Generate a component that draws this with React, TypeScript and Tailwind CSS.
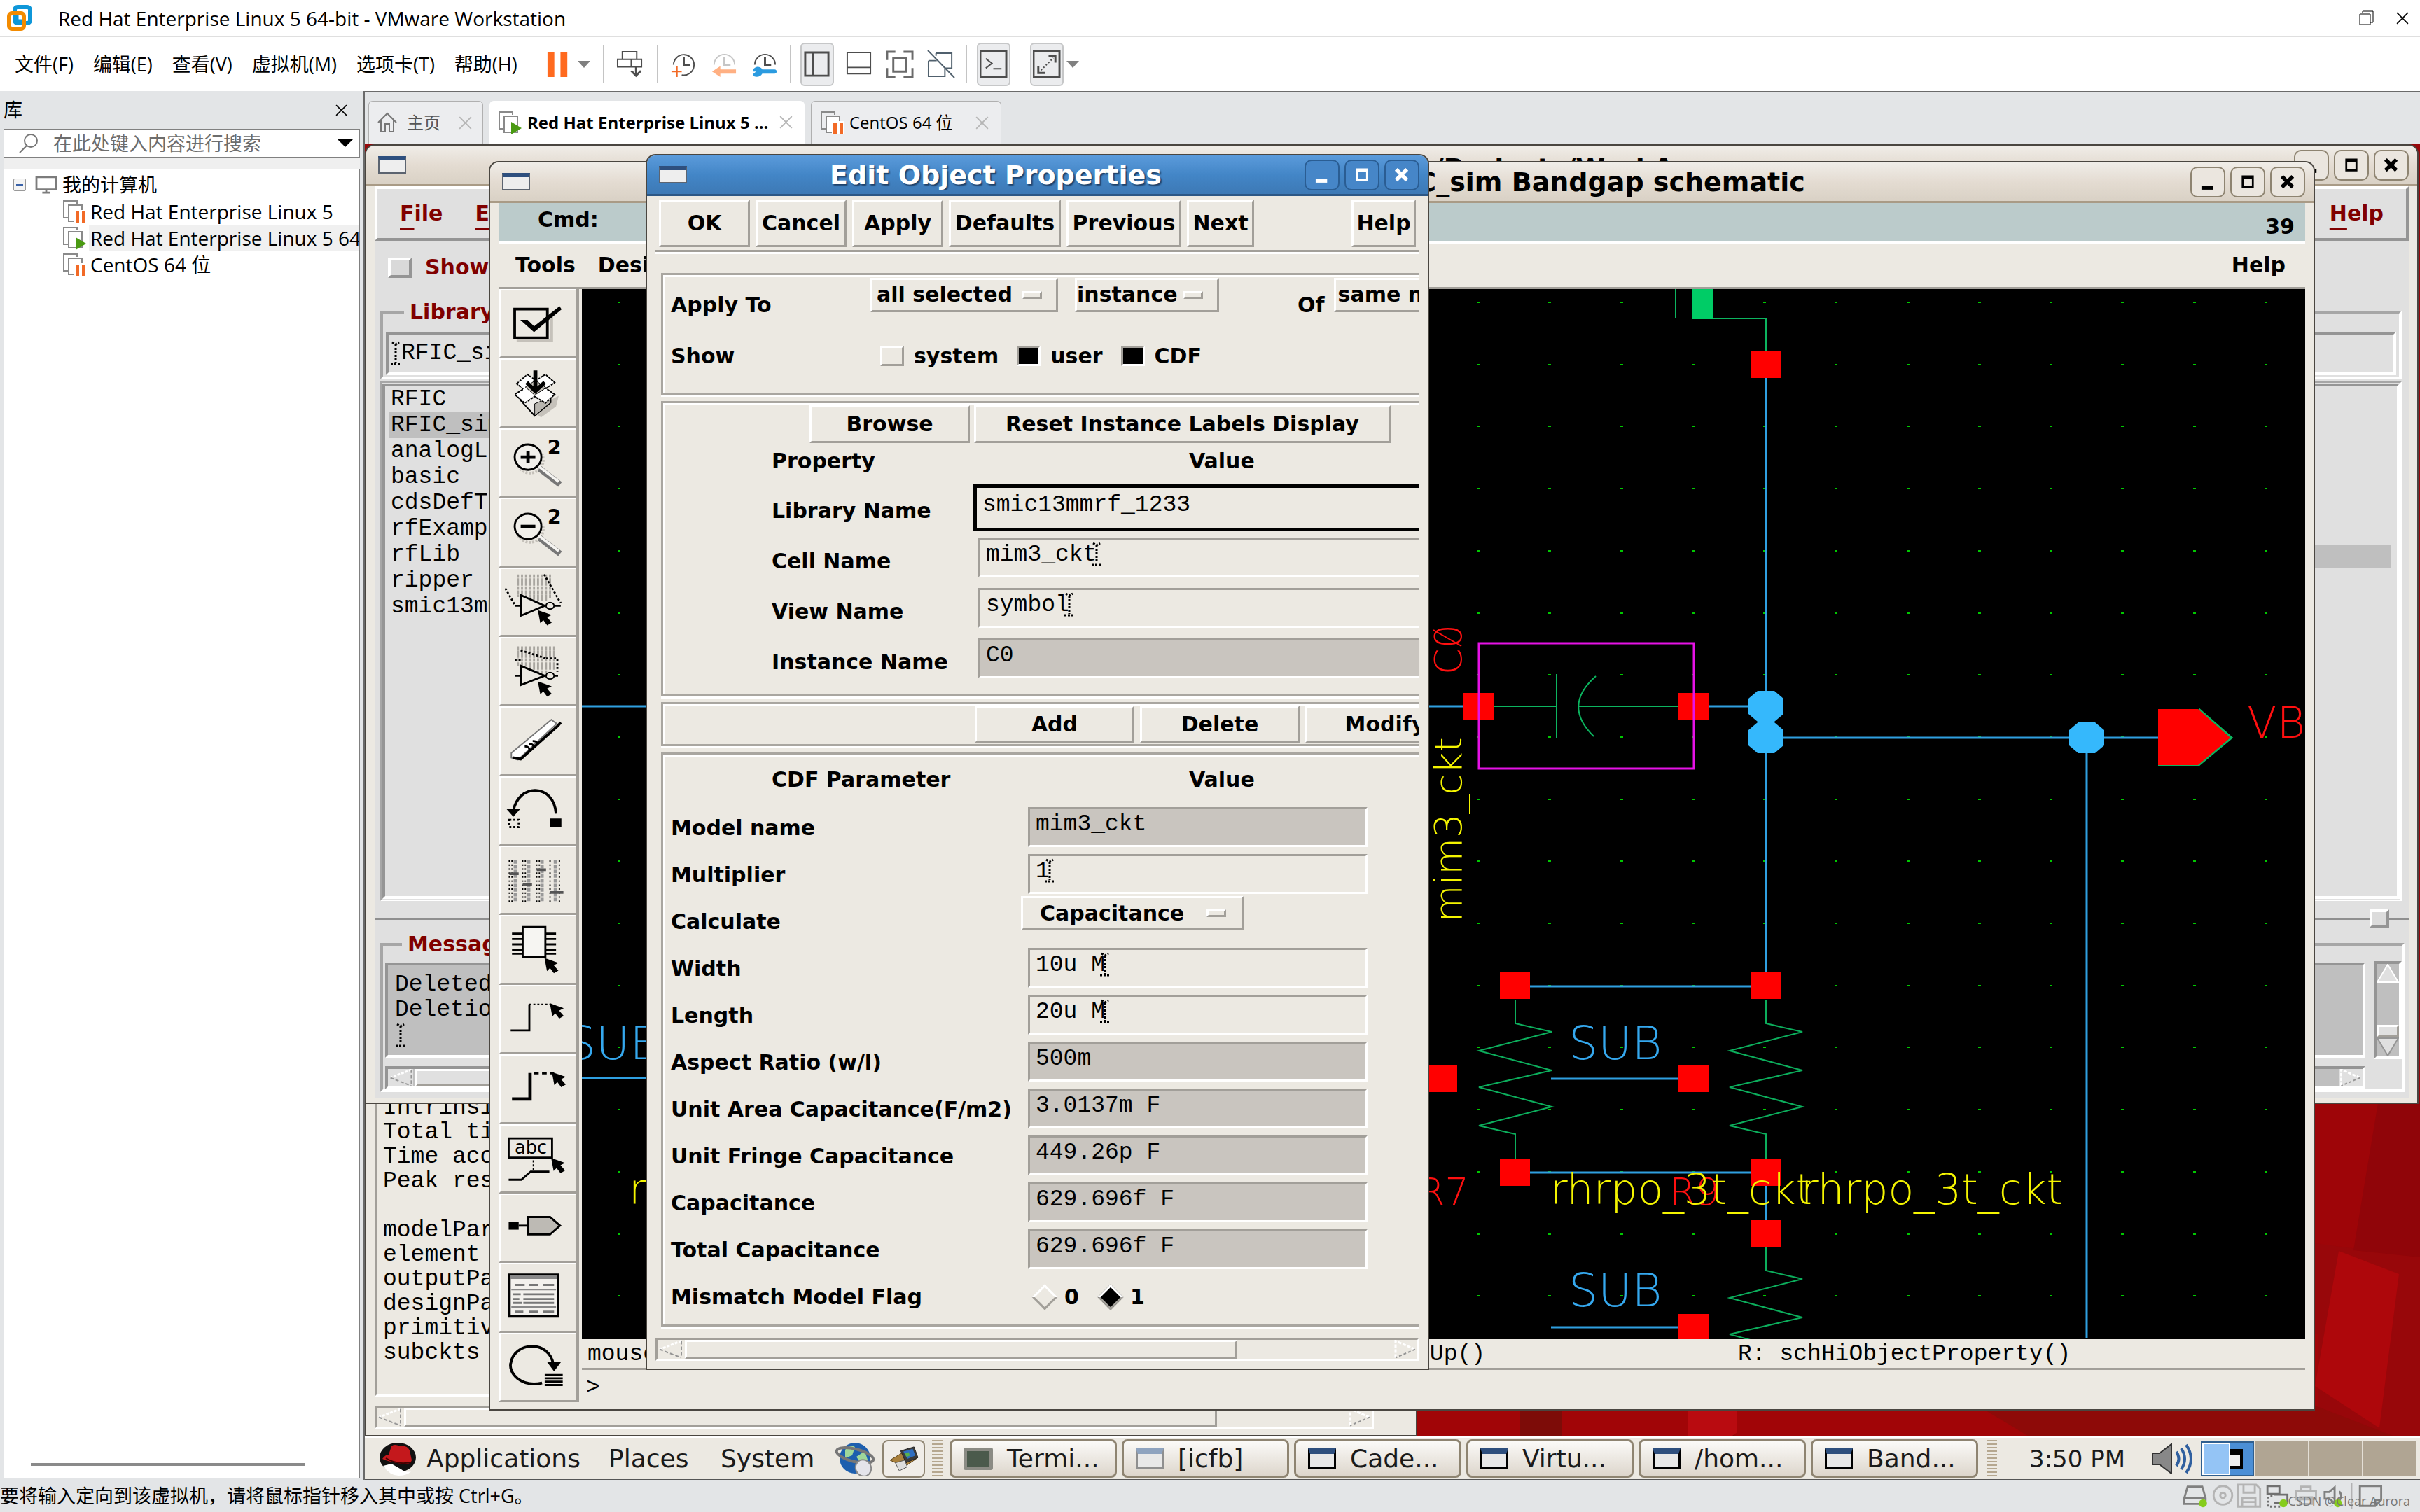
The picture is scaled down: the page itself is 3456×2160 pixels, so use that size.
import type { ReactNode } from 'react'

const ui = "font-['Open_Sans','Noto_Sans_CJK_SC',sans-serif]"
const label = "font-['DejaVu_Sans',sans-serif] font-bold text-[30px] leading-[36px] whitespace-nowrap"
const mono = "font-['Liberation_Mono',monospace] text-[33px] whitespace-pre"
const raised = 'border-[3px] border-t-white border-l-white border-r-[#a29f99] border-b-[#a29f99]'
const sunken = 'border-[3px] border-t-[#a29f99] border-l-[#a29f99] border-r-white border-b-white'
const raisedGray = 'border-[4px] border-t-white border-l-white border-r-[#959595] border-b-[#959595]'
const sunkenGray = 'border-[4px] border-t-[#959595] border-l-[#959595] border-r-white border-b-white'

/* ---------- VMware chrome ---------- */

function MenuBar() {
  const menus = ['文件(F)', '编辑(E)', '查看(V)', '虚拟机(M)', '选项卡(T)', '帮助(H)']
  return (
    <nav className="flex h-[79px] items-center border-t-2 border-[#dfdfdf] bg-white pl-[21px]">
      <div className="flex w-[737px] gap-[28px]">
        {menus.map((m) => (
          <button key={m} type="button" className="whitespace-nowrap">
            {m}
          </button>
        ))}
      </div>
      <Separator />
      <ToolButton title="Pause" className="ml-[20px] w-[38px]">
        <path d="M4 2h10v37H4zM23 2h10v37H23z" fill="#ff6a1f" />
      </ToolButton>
      <Caret className="ml-[8px] mr-[18px]" />
      <Separator />
      <ToolButton title="Ctrl+Alt+Del" className="ml-[18px] mr-[18px] w-[40px]">
        <g fill="none" stroke="#4d4d4d" strokeWidth="2">
          <path d="M9 12V2h21v10M2 13h35v11H2zM22 13v11" />
          <path d="M29 24v11M22 30l7 7 7-7" strokeWidth="3" />
        </g>
      </ToolButton>
      <Separator />
      <ToolButton title="Take snapshot" className="ml-[17px] w-[40px]">
        <path d="M6 21A15 15 0 1 1 18 36" fill="none" stroke="#4d4d4d" strokeWidth="2" />
        <path d="M21 10v11h9" fill="none" stroke="#4d4d4d" strokeWidth="3" />
        <path d="M3 31h15M11 23v16" stroke="#f26a26" strokeWidth="2" />
      </ToolButton>
      <ToolButton title="Revert snapshot" className="ml-[18px] w-[40px]">
        <path d="M6 21A15 15 0 1 1 36 21" fill="none" stroke="#c6c6c6" strokeWidth="2" />
        <path d="M21 10v11h9" fill="none" stroke="#c6c6c6" strokeWidth="3" />
        <path d="M3 31l12-8v5h23v6H15v5z" fill="#ffb083" />
      </ToolButton>
      <ToolButton title="Snapshot manager" className="ml-[18px] mr-[16px] w-[40px]">
        <path d="M6 21A15 15 0 1 1 36 21" fill="none" stroke="#4d4d4d" strokeWidth="2" />
        <path d="M21 10v11h9" fill="none" stroke="#4d4d4d" strokeWidth="3" />
        <path d="M8 31H3c1-8 11-9 14-3h18a3 3 0 0 1 0 6H17c-3 6-13 6-14 1z" fill="#2b9be0" />
      </ToolButton>
      <Separator />
      <ToolButton title="Library" pressed className="ml-[14px] w-[48px]">
        <path d="M3 3h34v34H3zM14 3v34" fill="none" stroke="#4d4d4d" strokeWidth="3" />
      </ToolButton>
      <ToolButton title="Thumbnails" className="ml-[16px] w-[40px]">
        <path d="M3 3h34v31H3zM3 25h34" fill="none" stroke="#4d4d4d" strokeWidth="2" />
      </ToolButton>
      <ToolButton title="Full screen" className="ml-[17px] w-[42px]">
        <path d="M2 14V2h12M26 2h13v12M39 26v13H26M14 39H2V26M11 11h19v20H11z" fill="none" stroke="#6b6b6b" strokeWidth="3" />
      </ToolButton>
      <ToolButton title="Unity" className="ml-[17px] mr-[15px] w-[42px]">
        <path d="M13 4h23v22H26M13 4v4M3 15h11M26 27v11H2V15" fill="none" stroke="#50606d" strokeWidth="2" />
        <path d="M1 0l39 40" stroke="#50606d" strokeWidth="2" />
      </ToolButton>
      <Separator />
      <ToolButton title="Console" pressed className="ml-[14px] mr-[13px] w-[48px]">
        <path d="M1 1h38v38H1z" fill="none" stroke="#4d4d4d" strokeWidth="3" />
        <path d="M9 12l9 7-9 7M20 27h12" fill="none" stroke="#4d4d4d" strokeWidth="2" />
      </ToolButton>
      <Separator />
      <ToolButton title="Stretch" pressed className="ml-[14px] w-[48px]">
        <path d="M1 1h38v38H1z" fill="none" stroke="#4d4d4d" strokeWidth="3" />
        <path d="M23 8h10v10M8 23v10h10" fill="none" stroke="#4d4d4d" strokeWidth="3" />
        <path d="M12 29l18-18" stroke="#4d4d4d" strokeWidth="2" strokeDasharray="2 3" />
      </ToolButton>
      <Caret className="ml-[4px]" />
    </nav>
  )
}

function Separator() {
  return <div className="h-[55px] w-px shrink-0 bg-[#c4c4c4]" />
}

function Caret({ className = '' }: { className?: string }) {
  return (
    <svg viewBox="0 0 18 10" className={`h-[10px] w-[18px] shrink-0 ${className}`}>
      <path d="M0 0h18l-9 10z" fill="#808080" />
    </svg>
  )
}

function ToolButton({ title, pressed, className = '', children }: { title: string; pressed?: boolean; className?: string; children: ReactNode }) {
  return (
    <button
      type="button"
      aria-label={title}
      className={`flex h-[62px] shrink-0 items-center justify-center ${pressed ? 'rounded-[6px] border-2 border-[#c6c7c8] bg-[#ebecee]' : ''} ${className}`}
    >
      <svg viewBox="0 0 41 41" className="size-[40px] shrink-0">
        {children}
      </svg>
    </button>
  )
}

function VmIcon({ state }: { state: 'paused' | 'running' }) {
  return (
    <svg viewBox="0 0 34 34" className="size-[34px] shrink-0">
      <path d="M10 26H2V2h19v4" fill="none" stroke="#8a8a8a" strokeWidth="2" />
      <path d="M9 8h19v23H9z" fill="#fff" stroke="#8a8a8a" strokeWidth="2" />
      {state === 'paused' ? (
        <>
          <path d="M17 15h17v19H17z" fill="#fff" />
          <path d="M19 17h5v16h-5zM28 17h5v16h-5z" fill="#f26a26" />
        </>
      ) : (
        <path d="M19 16l15 9-15 9z" fill="#4a9a12" />
      )}
    </svg>
  )
}

function Cross({ color, className }: { color: string; className: string }) {
  return (
    <svg viewBox="0 0 16 16" className={`shrink-0 ${className}`}>
      <path d="M1 1l14 14M15 1L1 15" stroke={color} strokeWidth="1.5" />
    </svg>
  )
}

function Sidebar() {
  const machines = [
    { name: 'Red Hat Enterprise Linux 5', state: 'paused' },
    { name: 'Red Hat Enterprise Linux 5 64', state: 'running' },
    { name: 'CentOS 64 位', state: 'paused' },
  ] as const
  return (
    <aside className="flex w-[519px] shrink-0 flex-col pb-[2px] pl-[5px] pr-[5px]">
      <div className="flex h-[54px] items-center justify-between pr-[18px]">
        <span>库</span>
        <button type="button" aria-label="Close library">
          <Cross color="#000" className="size-[17px]" />
        </button>
      </div>
      <div className="flex h-[41px] items-center border border-[#808080] bg-white pl-[20px] pr-[9px]">
        <svg viewBox="0 0 30 30" className="mr-[20px] size-[30px] shrink-0">
          <circle cx="18" cy="11" r="9" fill="none" stroke="#777" strokeWidth="2" />
          <path d="M12 18L2 28" stroke="#777" strokeWidth="2" />
        </svg>
        <input aria-label="搜索" placeholder="在此处键入内容进行搜索" className="min-w-0 flex-1 bg-transparent outline-none placeholder:text-[#6d6d6d]" />
        <svg viewBox="0 0 22 11" className="h-[11px] w-[22px] shrink-0">
          <path d="M0 0h22L11 11z" />
        </svg>
      </div>
      <div className="h-[16px] bg-[#efefef]" />
      <div className="flex flex-1 flex-col border border-[#808080] bg-white pt-[3px]">
        <div className="flex h-[38px] items-center pl-[13px]">
          <span className="flex size-[18px] items-center justify-center rounded-[2px] border border-[#999] bg-[#f4f4f4]">
            <span className="h-[2px] w-[10px] bg-[#3a62a8]" />
          </span>
          <svg viewBox="0 0 36 30" className="ml-[12px] mr-[6px] h-[28px] w-[34px]">
            <path d="M3 3h30v19H3zM12 27h12M18 22v5" fill="none" stroke="#7c7c7c" strokeWidth="3" />
          </svg>
          <span>我的计算机</span>
        </div>
        {machines.map((m) => (
          <div key={m.name} className="flex h-[38px] items-center overflow-hidden pl-[83px]">
            <VmIcon state={m.state} />
            <span className={`ml-[4px] flex-1 whitespace-nowrap pl-[2px] text-[28px] ${m.state === 'running' ? 'bg-[#f0f0f0]' : ''}`}>{m.name}</span>
          </div>
        ))}
        <div className="mb-[17px] ml-[38px] mt-auto h-[4px] w-[392px] bg-[#8a8a8a]" />
      </div>
    </aside>
  )
}

function Tabs() {
  return (
    <div className="flex h-[73px] items-end gap-[9px] pl-[5px] text-[24px]">
      <button type="button" className="flex h-[61px] w-[164px] items-center rounded-t-[6px] border border-b-0 border-[#b0b0b0] bg-[#ecedef] pl-[11px] text-[#555]">
        <svg viewBox="0 0 30 30" className="mr-[13px] size-[30px]">
          <path d="M2 15L15 2l13 13M6 12v16h6V17h6v11h6V12" fill="none" stroke="#777" strokeWidth="2" />
        </svg>
        <span className="whitespace-nowrap">主页</span>
        <Cross color="#b5b5b5" className="ml-[26px] size-[19px]" />
      </button>
      <button type="button" className="flex h-[61px] w-[450px] items-center rounded-t-[6px] bg-white pl-[12px] font-bold">
        <VmIcon state="running" />
        <span className="ml-[8px] w-[354px] overflow-hidden whitespace-nowrap text-left">Red Hat Enterprise Linux 5 ...</span>
        <Cross color="#b5b5b5" className="ml-[6px] size-[19px]" />
      </button>
      <button type="button" className="flex h-[61px] w-[272px] items-center rounded-t-[6px] border border-b-0 border-[#b0b0b0] bg-[#ecedef] pl-[12px]">
        <VmIcon state="paused" />
        <span className="ml-[8px] w-[164px] whitespace-nowrap text-left">CentOS 64 位</span>
        <Cross color="#b5b5b5" className="ml-[16px] size-[19px]" />
      </button>
    </div>
  )
}

function StatusBar() {
  return (
    <footer className="flex h-[46px] items-center justify-between bg-[#e3e5e7] pr-[44px]">
      <span className="whitespace-nowrap">要将输入定向到该虚拟机，请将鼠标指针移入其中或按 Ctrl+G。</span>
      <div className="relative flex items-center gap-[4px]">
        <svg viewBox="0 0 300 40" className="mr-[4px] h-[38px] w-[296px]">
          <g fill="none" strokeWidth="3">
            <path d="M2 23l5-17h22l5 17v9H2zM2 23h32" stroke="#808080" />
            <circle cx="60" cy="19" r="14" stroke="#b4b4b4" />
            <circle cx="60" cy="19" r="4" stroke="#b4b4b4" />
            <path d="M83 3h27l6 6v27H83zM91 3v12h17V3M89 36V23h20v13M89 29h20" stroke="#b4b4b4" />
            <path d="M127 5h18v12h-18zM137 18h20v13h-20M133 17v4" stroke="#707070" />
            <path d="M128 21v15h20" stroke="#707070" strokeDasharray="3 3" />
            <path d="M170 13h30v12h-30zM177 13V6h15v7M176 22h18v10h-18z" stroke="#b4b4b4" />
            <path d="M213 14h7l8-7v24l-8-7h-7zM235 13q6 7 0 14" stroke="#808080" />
            <path d="M266 5h32v21l-9 9h-23zM289 35v-9h9" stroke="#808080" />
          </g>
          <path d="M254 0v40" stroke="#9a9a9a" />
          <g fill="#86cc1c">
            <circle cx="30" cy="31" r="6" />
            <circle cx="151" cy="31" r="6" />
            <circle cx="233" cy="31" r="6" />
          </g>
        </svg>
        <span className="absolute bottom-0 right-[-30px] whitespace-nowrap text-[18px] leading-[24px] text-[#777]">CSDN @Clear Aurora</span>
      </div>
    </footer>
  )
}

/* ---------- Guest desktop ---------- */

function TitleButtons({ active }: { active?: boolean }) {
  const skin = active ? 'border-[#2a5d93] bg-[#4686c8] text-white' : 'border-[#8e8471] bg-[#ebe6df] text-black'
  const icons = ['M15 31h18', 'M17 13h16v17H17zM16 15h18', 'M16 13l17 17M33 13L16 30']
  return (
    <div className="flex gap-[7px]">
      {icons.map((d, i) => (
        <button key={d} type="button" aria-label={['Minimize', 'Maximize', 'Close'][i]} className={`h-[44px] w-[50px] rounded-[10px] border-2 ${skin}`}>
          <svg viewBox="0 0 50 44" className="-ml-[2px] h-[40px] w-[50px]">
            <path d={d} fill="none" stroke="currentColor" strokeWidth={i === 1 ? 3 : 6} />
          </svg>
        </button>
      ))}
    </div>
  )
}

function TitleBar({ title, active, lift }: { title: string; active?: boolean; lift?: boolean }) {
  const skin = active
    ? 'border-[#2c5785] bg-gradient-to-b from-[#5b9bdb] via-[#4386c7] to-[#3d79b5] text-white'
    : 'border-[#a99b86] bg-gradient-to-b from-[#f0ede8] via-[#e4dcd2] to-[#d9d1c5] text-black'
  return (
    <div className={`flex h-[58px] shrink-0 items-center rounded-t-[12px] border-b-[3px] pl-[17px] pr-[12px] ${skin}`}>
      <span className="h-[25px] w-[40px] border-2 border-t-[6px] border-[#5c6470] border-t-[#2e4f7e] bg-[#eeeeee]" />
      <span className={`flex-1 overflow-hidden whitespace-nowrap text-center font-['DejaVu_Sans',sans-serif] text-[38px] leading-[44px] font-bold ${active ? '[text-shadow:2px_2px_2px_#1d3f66]' : ''} ${lift ? 'pt-[8px]' : ''}`}>{title}</span>
      <TitleButtons active={active} />
    </div>
  )
}

function HScroll({ gray, thumb }: { gray?: boolean; thumb: string }) {
  return (
    <div className={`flex h-[33px] shrink-0 items-stretch justify-between ${gray ? sunkenGray + ' bg-[#bfbfbf]' : sunken}`}>
      <div className={`flex ${thumb}`}>
        <svg viewBox="0 0 36 26" className={`h-full w-[36px] shrink-0 ${gray ? 'bg-[#e0e0e0]' : ''}`}>
          <path d="M34 1L3 13" stroke="#fff" strokeWidth="3" strokeDasharray="4 2" />
          <path d="M3 13l31 12M34 1v24" stroke="#959595" strokeWidth="2" strokeDasharray="5 3" fill="none" />
        </svg>
        <div className={`ml-[3px] flex-1 ${raised} ${gray ? 'bg-[#e0e0e0]' : ''}`} />
      </div>
      <svg viewBox="0 0 34 26" className={`h-full w-[34px] shrink-0 ${gray ? 'bg-[#e0e0e0]' : ''}`}>
        <path d="M3 25V1l28 12" stroke="#fff" strokeWidth="3" fill="none" strokeDasharray="5 2" />
        <path d="M31 13L3 25" stroke="#959595" strokeWidth="2" strokeDasharray="4 3" />
      </svg>
    </div>
  )
}

function LogWindow() {
  const lines = ['Intrinsic', 'Total time', 'Time accum', 'Peak resid', '', 'modelParam', 'element', 'outputPara', 'designPara', 'primitives', 'subckts']
  return (
    <div className="absolute left-0 top-[1300px] flex h-[546px] w-[1503px] flex-col border-2 border-[#4a4640] bg-[#ece9e2] px-[12px] pb-[9px]">
      <div className={`mb-[13px] flex flex-1 flex-col justify-end pb-[42px] pl-[9px] ${sunken}`}>
        {lines.map((l, i) => (
          <div key={i} className={`h-[35px] leading-[35px] ${mono}`}>
            {l}
          </div>
        ))}
      </div>
      <div className="pr-[48px]">
        <HScroll thumb="w-[1200px]" />
      </div>
    </div>
  )
}

function MenuWord({ text, className = '' }: { text: string; className?: string }) {
  return (
    <button type="button" className={className}>
      <span className="underline decoration-[3px] underline-offset-[10px]">{text[0]}</span>
      {text.slice(1)}
    </button>
  )
}

function LibraryManager() {
  const libs = ['RFIC', 'RFIC_sim', 'analogLib', 'basic', 'cdsDefTechLib', 'rfExamples', 'rfLib', 'ripper', 'smic13mmrf_1233']
  return (
    <div className="absolute left-0 right-[2px] top-0 flex h-[1371px] flex-col rounded-t-[14px] border-2 border-[#4a4640] bg-[#ece9e2]">
      <TitleBar title="Library Manager: Directory ..../Projects/WorkArea" lift />
      <div className="mx-[12px] mb-[10px] flex flex-1 flex-col bg-[#e0e0e0] text-black">
        <div className={`flex h-[78px] items-center pl-[32px] pr-[32px] text-[#800000] ${label} ${raisedGray}`}>
          <MenuWord text="File" />
          <MenuWord text="Edit" className="ml-[46px]" />
          <MenuWord text="Help" className="ml-auto" />
        </div>
        <label className={`flex h-[76px] items-center gap-[19px] pl-[19px] text-[#800000] ${label}`}>
          <input type="checkbox" className={`h-[29px] w-[34px] appearance-none bg-[#d9d9d9] ${raisedGray}`} />
          Show Categories
        </label>
        <fieldset className="ml-[8px] mr-[10px] mt-[8px] h-[114px] border-[4px] border-[#a6a6a6] border-b-white border-r-white px-[4px] pt-[10px]">
          <legend className={`ml-[26px] px-[8px] text-[#800000] ${label}`}>Library</legend>
          <div className={`flex h-[62px] items-center pl-[2px] ${sunkenGray}`}>
            <IBeam />
            <input aria-label="Library" defaultValue="RFIC_sim" className={`min-w-0 flex-1 bg-transparent outline-none ${mono}`} />
          </div>
        </fieldset>
        <div className="ml-[8px] mr-[10px] mt-[3px] h-[742px] border-2 border-[#a6a6a6] border-b-white border-r-white p-[1px]">
          <div className={`flex h-full pl-[6px] ${sunkenGray}`}>
            <ul className="w-1/3">
              {libs.map((l) => (
                <li key={l} className={`h-[37px] pl-[2px] leading-[37px] ${mono} ${l === 'RFIC_sim' ? 'bg-[#bfbfbf]' : ''}`}>
                  {l}
                </li>
              ))}
            </ul>
            <div className="ml-auto mr-[8px] mt-[226px] h-[33px] w-1/3 bg-[#bfbfbf]" />
          </div>
        </div>
        <div className="mt-[12px] flex h-[26px] items-center justify-end">
          <div className="h-[3px] flex-1 bg-[#8f8f8f]" />
          <div className={`h-[26px] w-[28px] bg-[#dcdcdc] ${raisedGray}`} />
          <div className="h-[3px] w-[28px] bg-[#8f8f8f]" />
        </div>
        <fieldset className="mb-[8px] ml-[8px] mr-[6px] mt-[6px] flex flex-1 gap-[12px] border-[4px] border-[#a6a6a6] border-b-white border-r-white pl-[3px]">
          <legend className={`ml-[24px] px-[8px] text-[#800000] ${label}`}>Messages</legend>
          <div className="flex flex-1 flex-col gap-[12px] pt-[8px]">
            <div className={`relative h-[136px] bg-[#bfbfbf] pl-[10px] pt-[10px] leading-[36px] ${mono} ${sunkenGray}`}>
              <div>Deleted library</div>
              <div>Deletion complete</div>
              <IBeam />
            </div>
            <HScroll gray thumb="w-[2740px]" />
          </div>
          <div className={`mt-[6px] flex h-[140px] w-[40px] flex-col bg-[#bfbfbf] ${sunkenGray}`}>
            <svg viewBox="0 0 32 27" className="h-[27px] bg-[#bfbfbf]">
              <path d="M16 1l15 25H1z" fill="#e0e0e0" stroke="#fff" strokeWidth="2" />
            </svg>
            <div className={`mt-auto h-[18px] bg-[#e0e0e0] ${raised}`} />
            <svg viewBox="0 0 32 27" className="h-[27px]">
              <path d="M1 1h30L16 26z" fill="#e0e0e0" stroke="#959595" strokeWidth="2" />
            </svg>
          </div>
        </fieldset>
      </div>
    </div>
  )
}

function IBeam() {
  return (
    <svg viewBox="0 0 16 36" className="h-[36px] w-[16px] shrink-0">
      <path d="M3 2l5 3 5-3M8 5v26M1 33h14" fill="none" stroke="#000" strokeWidth="3" strokeDasharray="3 2" />
    </svg>
  )
}

/* ---------- Schematic editor ---------- */

const cursor = 'l17 6-6 3 7 8-5 3-6-8-4 4z'

const tools: { name: string; art: ReactNode }[] = [
  {
    name: 'Check and Save',
    art: (
      <>
        <path d="M24 75h52V36" stroke="#c5c1ba" strokeWidth="5" />
        <path d="M21 28h49v43H21z" strokeWidth="4" />
        <path d="M32 45l8 0 10 10 38-30 2 3-40 33z" fill="#000" />
      </>
    ),
  },
  {
    name: 'Save',
    art: (
      <>
        <path d="M55 84l20-24 12-6-4 16-22 16z" fill="#c5c1ba" stroke="none" />
        <path d="M29 60l22 24 24-20V58L51 48z" fill="#efedea" />
        <path d="M51 84V66l24-10v8z" fill="#b9b6b0" strokeWidth="1" />
        <path d="M24 36l16-14 13 9 14-9 14 12-13 9 13 9-14 13-16-10-15 10-15-13 13-8z" fill="#fff" strokeDasharray="4 1" />
        <path d="M37 41l15-10 16 11-17 11z" fill="#c5c1ba" strokeWidth="1" />
        <path d="M52 16v28M39 34l13 13 14-13" strokeWidth="6" />
      </>
    ),
  },
  { name: 'Zoom In', art: <Magnifier plus /> },
  { name: 'Zoom Out', art: <Magnifier /> },
  {
    name: 'Stretch',
    art: (
      <>
        <path d="M26 8v34M32 8v34M38 8v34M44 8v36M50 8v38M56 8v40M62 8v40M68 8v40M74 8v36" stroke="#a9a6a0" strokeWidth="3" strokeDasharray="5 1" />
        <path d="M7 29l15 26M65 8l25 43" strokeWidth="3" strokeDasharray="3 3" />
        <path d="M22 55h8M30 39v31l36-15zM80 55h10" strokeWidth="3" />
        <ellipse cx="74" cy="55" rx="6" ry="5" />
        <path d={`M57 63${cursor}`} fill="#000" />
      </>
    ),
  },
  {
    name: 'Copy',
    art: (
      <>
        <path d="M26 12v30M32 12v30M38 12v30M44 12v36M50 12v38M56 12v40M62 12v40M68 12v40M74 12v36M80 12v36" stroke="#a9a6a0" strokeWidth="3" strokeDasharray="5 1" />
        <path d="M21 33h9M30 18l38 12M68 30h17v20" strokeWidth="3" strokeDasharray="3 3" />
        <path d="M22 56h8M30 41v29l36-14zM80 56h6" strokeWidth="3" />
        <ellipse cx="74" cy="56" rx="6" ry="5" />
        <path d={`M57 66${cursor}`} fill="#000" />
      </>
    ),
  },
  {
    name: 'Delete',
    art: (
      <>
        <path d="M16 68l60-50 8 6-58 54-10-3z" fill="#fff" stroke="#777" />
        <path d="M18 75l12 2 56-50 4-5" strokeWidth="4" />
        <path d="M36 58q8 0 7 7M42 54q8 0 7 6M48 50q8 0 7 6" strokeWidth="3" />
      </>
    ),
  },
  {
    name: 'Undo',
    art: (
      <>
        <path d="M19 50C26 8 80 8 83 54" strokeWidth="4" />
        <path d="M11 48h16l-8 9z" fill="#000" />
        <path d="M75 62h15v11H75z" fill="#000" />
        <path d="M13 63h14v11H13z" strokeWidth="3" strokeDasharray="3 3" />
      </>
    ),
  },
  {
    name: 'Properties',
    art: (
      <>
        <path d="M13 20v62M33 20v62M54 20v62M74 20v62M17 20v62M37 20v62M58 20v62M88 20v62" strokeDasharray="2 4" />
        <path d="M22 20v62M42 20v62M62 20v62M82 20v62" stroke="#999" strokeWidth="5" strokeDasharray="5 2" />
        <path d="M13 40h14M33 56h14M54 34h14M74 68h20" stroke="#555" strokeWidth="4" />
      </>
    ),
  },
  {
    name: 'Instance',
    art: (
      <>
        <path d="M17 26h66M17 34h66M17 42h66M17 50h66M17 56h66" strokeWidth="3" />
        <path d="M33 16h34v45H33z" fill="#f6f5f2" strokeWidth="3" />
        <path d={`M67 64${cursor}`} fill="#000" />
      </>
    ),
  },
  {
    name: 'Wire (narrow)',
    art: (
      <>
        <path d="M15 66h28V27" strokeWidth="3" />
        <path d="M43 27h34" strokeDasharray="3 3" />
        <path d={`M75 27${cursor}`} fill="#000" />
      </>
    ),
  },
  {
    name: 'Wire (wide)',
    art: (
      <>
        <path d="M17 65h27V26" strokeWidth="5" />
        <path d="M50 26h30" strokeWidth="4" strokeDasharray="7 5" />
        <path d={`M78 26${cursor}`} fill="#000" />
      </>
    ),
  },
  {
    name: 'Wire Name',
    art: (
      <>
        <path d="M12 19h65v29H12z" strokeWidth="3" />
        <text x="21" y="42" fontSize="27" fill="#000" stroke="none" fontFamily="DejaVu Sans">
          abc
        </text>
        <path d="M49 52v14" strokeDasharray="3 3" />
        <path d="M12 81h19l14-12h28" strokeWidth="3" />
        <path d={`M77 50${cursor}`} fill="#000" />
      </>
    ),
  },
  {
    name: 'Pin',
    art: (
      <>
        <path d="M12 46h15" strokeWidth="12" />
        <path d="M27 46h14" strokeWidth="3" />
        <path d="M41 33h33l15 13-15 13H41z" fill="#bdbab4" strokeWidth="3" />
      </>
    ),
  },
  {
    name: 'Cmd Options',
    art: (
      <>
        <path d="M13 16h73v62H13z" fill="#f3f1ed" strokeWidth="4" />
        <path d="M14 19h71" stroke="#888" strokeWidth="6" />
        <path d="M16 38h67M16 64h67" stroke="#888" />
        <path d="M22 31h14M42 31h14M64 31h16M18 45h12M34 45h46M18 52h10M34 52h46M18 58h14M34 58h46M22 71h12M42 71h14M64 71h16" stroke="#777" strokeWidth="3" />
      </>
    ),
  },
  {
    name: 'Repeat',
    art: (
      <>
        <path d="M62 73C30 80 12 58 15 44C20 10 74 8 79 46" strokeWidth="4" />
        <path d="M71 42h18l-9 12z" fill="#000" />
        <path d="M66 61h27M66 66h27M66 71h27M66 76h27" strokeWidth="3" />
      </>
    ),
  },
]

function Magnifier({ plus }: { plus?: boolean }) {
  return (
    <>
      <circle cx="44" cy="45" r="20" stroke="#c5c1ba" strokeWidth="4" strokeDasharray="3 2" />
      <path d="M58 58l31 24" stroke="#777" strokeWidth="9" />
      <path d="M56 54l31 24" stroke="#f6f5f2" strokeWidth="4" />
      <ellipse cx="41" cy="41" rx="20" ry="19" fill="#f1efea" strokeWidth="3" />
      <path d={plus ? 'M30 41h22M41 32v18' : 'M30 41h22'} strokeWidth="5" />
      <text x="70" y="37" fontSize="30" fill="#000" stroke="none" fontFamily="DejaVu Sans" fontWeight="bold">
        2
      </text>
    </>
  )
}

const dotCols = Array.from({ length: 24 }, (_, n) => Math.round(53 + n * 102.25))
const dotRows = Array.from({ length: 17 }, (_, n) => Math.round(19 + n * 88.7))

function Resistor({ x, y }: { x: number; y: number }) {
  return <path d={`M${x} ${y}v34l52 12-104 27 104 28-104 24 104 28-104 27 52 12v37`} fill="none" stroke="#0cae5c" strokeWidth="2" />
}

function Pad({ x, y }: { x: number; y: number }) {
  return <rect x={x - 22} y={y - 19} width="43" height="38" fill="#ff0000" />
}

function Junction({ x, y }: { x: number; y: number }) {
  return <path d={`M${x - 12} ${y - 22}h24l13 11v22l-13 11h-24l-13-11v-22z`} fill="#35b8fc" />
}

function Schematic() {
  return (
    <svg className="min-h-0 w-full flex-1 bg-black" fontFamily="DejaVu Sans, sans-serif" fontWeight="200">
      {dotCols.map((x) => dotRows.map((y) => <rect key={`${x}-${y}`} x={x - 2} y={y - 1} width="4" height="2" fill="#00c800" />))}
      <g stroke="#2f9fe0" strokeWidth="3" fill="none">
        <path d="M0 596h1259M1609 596h82M1691 127v848M1691 641h561M2149 641v858M1354 996h315M1384 1128h182M0 1127h92M1354 1262h315M1691 1280v51M1384 1483h182" />
      </g>
      <g stroke="#0cb45f" strokeWidth="2" fill="none">
        <path d="M1562 0v42M1615 42h76v48M1302 596h90M1392 550v91M1424 596h142M1448 553q-48 42 -3 86" />
        <path d="M2251 680h58l47-39-47-41" strokeWidth="3" />
      </g>
      <rect x="1586" y="0" width="29" height="43" fill="#00cc66" />
      <path d="M2251 600h57l46 41-46 39h-57z" fill="#ff0000" />
      <Resistor x={1333} y={1015} />
      <Resistor x={1691} y={1015} />
      <Resistor x={1691} y={1368} />
      <Pad x={1691} y={108} />
      <Pad x={1281} y={596} />
      <Pad x={1588} y={596} />
      <Pad x={1333} y={995} />
      <Pad x={1691} y={995} />
      <Pad x={1229} y={1128} />
      <Pad x={1588} y={1128} />
      <Pad x={1333} y={1262} />
      <Pad x={1691} y={1262} />
      <Pad x={1691} y={1349} />
      <Pad x={1588} y={1483} />
      <rect x="1281" y="506" width="307" height="179" fill="none" stroke="#e612e6" strokeWidth="3" />
      <Junction x={1691} y={596} />
      <Junction x={1691} y={641} />
      <Junction x={2149} y={641} />
      <g fill="#ff1010">
        <text transform="translate(1256 551) rotate(-90)" fontSize="54">
          C0
        </text>
        <path d="M1216 487l40 23" stroke="#ff1010" strokeWidth="2" />
        <text x="2378" y="641" fontSize="62">
          VB
        </text>
        <text x="1195" y="1308" fontSize="54">
          R7
        </text>
        <text x="1553" y="1308" fontSize="54">
          R9
        </text>
      </g>
      <g fill="#f4f400">
        <text transform="translate(1256 904) rotate(-90)" fontSize="54">
          mim3_ckt
        </text>
        <text x="67" y="1307" fontSize="60">
          rhrpo_3t_ckt
        </text>
        <text x="1383" y="1307" fontSize="60">
          rhrpo_3t_ckt
        </text>
        <text x="1741" y="1307" fontSize="60">
          rhrpo_3t_ckt
        </text>
      </g>
      <g fill="#35a8ee" fontSize="66">
        <text x="-22" y="1100">
          SUB
        </text>
        <text x="1409" y="1100">
          SUB
        </text>
        <text x="1409" y="1453">
          SUB
        </text>
      </g>
    </svg>
  )
}

function SchematicWindow() {
  return (
    <div className="absolute left-[177px] top-[24px] flex h-[1785px] w-[2608px] flex-col rounded-t-[14px] border-2 border-[#4a4640] bg-[#ece9e2] text-black">
      <TitleBar title="Virtuoso® Schematic Editing: RFIC_sim Bandgap schematic" />
      <div className="mx-[12px] mb-[10px] flex min-h-0 flex-1 flex-col">
        <div className={`flex h-[55px] items-center justify-between bg-[#bbcbcb] pl-[56px] pr-[15px] ${label}`}>
          <span className="pb-[8px]">Cmd:</span>
          <span className="pt-[12px]">39</span>
        </div>
        <div className={`flex h-[68px] items-center border-t-[3px] border-b-[3px] border-t-white border-b-[#a29f99] pl-[24px] pr-[28px] ${label}`}>
          <button type="button">Tools</button>
          <button type="button" className="ml-[32px]">
            Design
          </button>
          <button type="button" className="ml-auto">
            Help
          </button>
        </div>
        <div className="flex min-h-0 flex-1">
          <div className="mr-[4px] flex w-[115px] shrink-0 flex-col border-r-[4px] border-[#a29f99]">
            {tools.map((t) => (
              <button key={t.name} type="button" aria-label={t.name} className="min-h-0 w-full flex-1 border-b-[3px] border-l-[3px] border-t-2 border-b-[#a29f99] border-l-white border-t-white">
                <svg viewBox="0 0 110 99" preserveAspectRatio="xMinYMid meet" className="h-full w-full" fill="none" stroke="#000" strokeWidth="2">
                  {t.art}
                </svg>
              </button>
            ))}
          </div>
          <div className="flex min-w-0 flex-1 flex-col">
            <Schematic />
            <div className={`flex h-[44px] items-center border-b-[3px] border-[#a29f99] pl-[8px] pt-[2px] ${mono}`}>
              <span className="w-[886px]">mouse L: showClickInfo()</span>
              <span className="w-[757px]">M: schHiMousePopUp()</span>
              <span>R: schHiObjectProperty()</span>
            </div>
            <div className={`h-[46px] pl-[6px] leading-[52px] ${mono}`}>&gt;</div>
          </div>
        </div>
      </div>
    </div>
  )
}

/* ---------- Edit Object Properties ---------- */

function Field({ id, value, disabled, caret, className }: { id: string; value: string; disabled?: boolean; caret?: boolean; className: string }) {
  return (
    <div className="relative">
      <input
        id={id}
        defaultValue={value}
        readOnly={disabled}
        className={`block pb-[8px] pl-[8px] outline-none ${mono} ${disabled ? 'bg-[#c9c5bf]' : 'bg-[#ece9e2]'} ${className}`}
      />
      {caret && (
        <span className="absolute top-[6px]" style={{ left: 3 + Math.round(value.length * 19.8) }}>
          <IBeam />
        </span>
      )}
    </div>
  )
}

function Option({ name, value, className }: { name: string; value: string; className: string }) {
  return (
    <div className={`flex shrink-0 items-center ${raised} ${className}`}>
      <select aria-label={name} className={`min-w-0 flex-1 appearance-none bg-transparent outline-none ${label}`}>
        <option>{value}</option>
      </select>
      <span className={`h-[11px] w-[28px] shrink-0 ${raised}`} />
    </div>
  )
}

function PushButton({ children, className }: { children: ReactNode; className: string }) {
  return (
    <button type="button" className={`shrink-0 ${label} ${raised} ${className}`}>
      {children}
    </button>
  )
}

function PropertiesDialog() {
  const group = 'border-[3px] border-r-0 border-[#a9a6a0] shadow-[inset_3px_3px_0_#fff,0_3px_0_#fff]'
  const names = [
    { name: 'Library Name', value: 'smic13mmrf_1233', focus: true },
    { name: 'Cell Name', value: 'mim3_ckt', caret: true },
    { name: 'View Name', value: 'symbol', caret: true },
    { name: 'Instance Name', value: 'C0', disabled: true },
  ]
  const params = [
    { name: 'Model name', value: 'mim3_ckt', disabled: true },
    { name: 'Multiplier', value: '1', caret: true },
    { name: 'Calculate', option: 'Capacitance' },
    { name: 'Width', value: '10u M', caret: true },
    { name: 'Length', value: '20u M', caret: true },
    { name: 'Aspect Ratio (w/l)', value: '500m', disabled: true },
    { name: 'Unit Area Capacitance(F/m2)', value: '3.0137m F', disabled: true },
    { name: 'Unit Fringe Capacitance', value: '449.26p F', disabled: true },
    { name: 'Capacitance', value: '629.696f F', disabled: true },
    { name: 'Total Capacitance', value: '629.696f F', disabled: true },
  ]
  const filters = [
    { name: 'system', on: false },
    { name: 'user', on: true },
    { name: 'CDF', on: true },
  ]
  return (
    <div className="absolute left-[401px] top-[14px] flex h-[1737px] w-[1119px] flex-col rounded-t-[14px] border-2 border-[#4a4640] bg-[#ece9e2] text-black">
      <TitleBar title="Edit Object Properties" active />
      <div className="mx-[12px] flex h-[80px] gap-[8px] border-b-[3px] border-[#a29f99] pb-[4px] pl-[5px] pr-[5px] pt-[5px] shadow-[0_3px_0_#fff]">
        <PushButton className="w-[130px]">OK</PushButton>
        <PushButton className="w-[130px]">Cancel</PushButton>
        <PushButton className="w-[130px]">Apply</PushButton>
        <PushButton className="w-[160px]">Defaults</PushButton>
        <PushButton className="w-[164px]">Previous</PushButton>
        <PushButton className="w-[96px]">Next</PushButton>
        <PushButton className="ml-auto w-[92px]">Help</PushButton>
      </div>
      <div className="ml-[20px] mr-[12px] flex flex-col overflow-hidden pb-[3px] pt-[30px]">
        <div className={`h-[174px] pl-[11px] ${group}`}>
          <div className="flex h-[80px] items-center">
            <span className={`w-[285px] shrink-0 pt-[6px] ${label}`}>Apply To</span>
            <Option name="Selection" value="all selected" className="mb-[24px] mr-[24px] h-[49px] w-[268px] pl-[6px] pr-[20px]" />
            <Option name="Object type" value="instance" className="mb-[24px] h-[49px] w-[206px] pr-[20px]" />
            <span className={`ml-[112px] mr-[13px] pt-[6px] ${label}`}>Of</span>
            <Option name="Match" value="same name" className="mb-[24px] h-[49px] w-[280px] pl-[3px]" />
          </div>
          <div className="flex h-[69px] items-center pt-[2px]">
            <span className={`w-[299px] shrink-0 ${label}`}>Show</span>
            {filters.map((f) => (
              <label key={f.name} className={`mr-[26px] flex items-center gap-[14px] ${label}`}>
                <input type="checkbox" defaultChecked={f.on} className="h-[29px] w-[34px] appearance-none border-[3px] border-b-[#a29f99] border-l-white border-r-[#a29f99] border-t-white checked:border-b-white checked:border-l-[#a29f99] checked:border-r-white checked:border-t-[#a29f99] checked:bg-black" />
                {f.name}
              </label>
            ))}
          </div>
        </div>

        <div className={`mt-[9px] h-[422px] ${group}`}>
          <div className="flex gap-[6px] pl-[209px] pt-[3px]">
            <PushButton className="h-[54px] w-[229px]">Browse</PushButton>
            <PushButton className="h-[54px] w-[595px]">Reset Instance Labels Display</PushButton>
          </div>
          <div className={`flex h-[59px] items-center pb-[7px] pl-[155px] ${label}`}>
            <span className="w-[596px]">Property</span>
            <span>Value</span>
          </div>
          {names.map((n) => (
            <div key={n.name} className="flex h-[72px] items-start pl-[155px]">
              <label htmlFor={n.name} className={`${n.focus ? 'w-[288px]' : 'w-[295px]'} shrink-0 pt-[20px] ${label}`}>
                {n.name}
              </label>
              <div className={n.focus ? '' : 'pt-[4px]'}>
                <Field
                  id={n.name}
                  value={n.value}
                  disabled={n.disabled}
                  caret={n.caret}
                  className={n.focus ? 'h-[67px] w-[700px] border-[5px] border-black' : `h-[57px] w-[700px] ${sunken}`}
                />
              </div>
            </div>
          ))}
        </div>

        <div className={`mt-[8px] flex h-[63px] gap-[8px] pl-[445px] pt-[2px] ${group}`}>
          <PushButton className="h-[53px] w-[228px]">Add</PushButton>
          <PushButton className="h-[53px] w-[228px]">Delete</PushButton>
          <PushButton className="h-[53px] w-[228px]">Modify</PushButton>
        </div>

        <div className={`mt-[9px] h-[820px] pl-[11px] ${group}`}>
          <div className={`flex h-[70px] items-center pl-[144px] pt-[2px] ${label}`}>
            <span className="w-[596px]">CDF Parameter</span>
            <span>Value</span>
          </div>
          {params.map((p) => (
            <div key={p.name} className="flex h-[67px] items-center">
              <label htmlFor={p.name} className={`w-[510px] shrink-0 pt-[3px] ${label}`}>
                {p.name}
              </label>
              {p.option ? (
                <Option name={p.name} value={p.option} className="-ml-[10px] mb-[22px] h-[49px] w-[318px] pl-[24px] pr-[22px]" />
              ) : (
                <Field id={p.name} value={p.value ?? ''} disabled={p.disabled} caret={p.caret} className={`h-[57px] w-[485px] ${sunken}`} />
              )}
            </div>
          ))}
          <div className={`flex h-[67px] items-center pt-[3px] ${label}`}>
            <span className="w-[521px]">Mismatch Model Flag</span>
            {['0', '1'].map((v) => (
              <label key={v} className="mr-[32px] flex items-center gap-[15px]">
                <input type="radio" name="mismatch" defaultChecked={v === '1'} className="size-[26px] rotate-45 appearance-none border-[3px] border-b-[#a29f99] border-l-white border-r-[#a29f99] border-t-white checked:bg-black" />
                {v}
              </label>
            ))}
          </div>
        </div>
      </div>
      <div className="mx-[12px] mt-auto mb-[11px]">
        <HScroll thumb="w-[828px]" />
      </div>
    </div>
  )
}

/* ---------- GNOME panel ---------- */

function Grip() {
  return <div className="h-[54px] w-[15px] shrink-0 bg-[repeating-linear-gradient(to_bottom,#b5a78f_0_2px,transparent_2px_5px)]" />
}

function Panel() {
  const tasks = ['Termi...', '[icfb]', 'Cade...', 'Virtu...', '/hom...', 'Band...']
  return (
    <div className="absolute inset-x-0 bottom-0 flex h-[62px] items-center border-t-[3px] border-white bg-[#ece9e2] pl-[20px] pr-[6px] font-['DejaVu_Sans',sans-serif] text-[36px] text-[#1a1a1a]">
      <svg viewBox="0 0 54 48" className="h-[48px] w-[54px] shrink-0">
        <ellipse cx="27" cy="22" rx="26" ry="21" fill="#111" />
        <path d="M6 34q10 14 22 14t18-6q-8 2-14-3l-14-8z" fill="#fff" />
        <path d="M5 24q4-6 9-6l4-12q4-4 12 0 10-2 14 6l3 14q-2 7-14 5-20-3-28-7z" fill="#c4181c" />
        <path d="M10 23q16 10 36 6" stroke="#400" fill="none" strokeWidth="2" />
      </svg>
      <button type="button" className="ml-[14px] w-[222px] text-left">
        Applications
      </button>
      <button type="button" className="ml-[38px] w-[120px] text-left">
        Places
      </button>
      <button type="button" className="ml-[40px] w-[138px] text-left">
        System
      </button>
      <svg viewBox="0 0 58 50" className="ml-[26px] h-[50px] w-[58px] shrink-0">
        <circle cx="28" cy="24" r="22" fill="#1d5fae" />
        <path d="M14 12q8-8 14-4l-4 12-10 4zM30 22l12-8 4 12-8 8z" fill="#9fd79a" />
        <ellipse cx="28" cy="20" rx="27" ry="9" fill="none" stroke="#777" strokeWidth="4" transform="rotate(14 28 20)" />
        <ellipse cx="40" cy="38" rx="11" ry="12" fill="#e4e4ea" stroke="#888" strokeWidth="2" transform="rotate(-25 40 38)" />
      </svg>
      <button type="button" aria-label="Show desktop" className="ml-[9px] flex h-[54px] w-[61px] shrink-0 items-center justify-center rounded-[8px] border-2 border-[#8e8471] bg-[#f0ede8]">
        <svg viewBox="0 0 46 40" className="h-[38px] w-[44px]">
          <path d="M2 22l20-12 22 8-20 14z" fill="#a9803c" stroke="#553d15" />
          <path d="M18 8l20-6 6 16-18 8z" fill="#3a3a3a" stroke="#222" />
          <path d="M22 9l14-4 4 10-12 5z" fill="#2f6ec0" />
          <path d="M24 12l6-2 2 5-5 2z" fill="#58b04c" />
          <path d="M10 26l14-4 4 10-12 6z" fill="#ddd" stroke="#555" />
        </svg>
      </button>
      <div className="ml-[10px]">
        <Grip />
      </div>
      <div className="ml-[10px] flex gap-[7px]">
        {tasks.map((t, i) => (
          <button key={t} type="button" className="flex h-[55px] w-[239px] items-center rounded-[8px] border-[3px] border-[#8e8471] bg-gradient-to-b from-[#fbfaf8] to-[#ddd6cc] pl-[17px]">
            {i === 0 ? (
              <span className="h-[32px] w-[42px] shrink-0 rounded-[3px] border-[5px] border-[#8b8b84] bg-[#4b5a4c]" />
            ) : (
              <span className={`h-[30px] w-[40px] shrink-0 border-[3px] border-t-[8px] bg-[#e8e8e8] ${i === 1 ? 'border-[#8f8f8f] border-t-[#8ea3bf]' : 'border-black border-t-[#2e4f7e]'}`} />
            )}
            <span className="ml-[20px] whitespace-nowrap">{t}</span>
          </button>
        ))}
      </div>
      <div className="ml-[12px]">
        <Grip />
      </div>
      <span className="ml-auto whitespace-nowrap text-[34px]">3:50 PM</span>
      <svg viewBox="0 0 62 44" className="ml-[36px] h-[44px] w-[62px] shrink-0">
        <path d="M3 14h10L30 1v42L13 30H3z" fill="#888" stroke="#333" strokeWidth="2" />
        <path d="M37 12q7 10 0 20M44 7q10 15 0 30M51 2q14 20 0 40" fill="none" stroke="#2f5f9f" strokeWidth="4" />
      </svg>
      <div className="ml-[10px] flex h-[50px] gap-[2px] bg-[#e4dfd6]">
        <div className="flex w-[76px] items-center justify-end border-2 border-[#2f5f8f] bg-[#4b8fd6]">
          <span className="h-full flex-1 border-2 border-white bg-[#94c4f5]" />
          <span className="mr-[14px] h-[28px] w-[18px] border-[4px] border-l-0 border-t-[8px] border-black bg-[#eee]" />
        </div>
        <div className="w-[75px] bg-[#b0a593]" />
        <div className="w-[75px] bg-[#b0a593]" />
        <div className="w-[75px] bg-[#b0a593]" />
      </div>
    </div>
  )
}

export default function App() {
  return (
    <div className={`flex h-screen w-full flex-col bg-[#e3e5e7] text-[27px] leading-[36px] text-black ${ui}`}>
      <header className="flex h-[51px] shrink-0 items-center bg-white pl-[9px] pr-[16px]">
        <svg viewBox="0 0 38 38" className="mr-[36px] size-[38px]">
          <rect x="12" y="3" width="22" height="23" rx="4" fill="none" stroke="#0f97d9" strokeWidth="6" />
          <rect x="4" y="12" width="21" height="22" rx="4" fill="none" stroke="#f38b00" strokeWidth="6" />
          <path d="M15 15v8h7" fill="none" stroke="#0f97d9" strokeWidth="5" />
        </svg>
        <span className="whitespace-nowrap text-[28px]">Red Hat Enterprise Linux 5 64-bit - VMware Workstation</span>
        <div className="ml-auto flex items-center gap-[32px]">
          <button type="button" aria-label="Minimize" className="h-px w-[17px] bg-black" />
          <button type="button" aria-label="Restore">
            <svg viewBox="0 0 21 21" className="size-[21px]">
              <path d="M5 4V1h15v16h-4M1 5h15v15H1z" fill="none" stroke="#000" />
            </svg>
          </button>
          <button type="button" aria-label="Close">
            <Cross color="#000" className="size-[18px]" />
          </button>
        </div>
      </header>
      <MenuBar />
      <div className="flex min-h-0 flex-1">
        <Sidebar />
        <main className="flex min-w-0 flex-1 flex-col border-l-2 border-t-2 border-[#6a6a6a]">
          <Tabs />
          <div className="relative min-h-0 flex-1 overflow-hidden border-b border-t border-[#555] bg-[#98070a]">
            <svg className="absolute inset-0 h-full w-full">
              <path d="M1490 1700h1300v200H1490z" fill="#a10507" />
              <path d="M1650 1780h60v100h-60zM1935 1840l90 20v40h-90z" fill="#7d0c08" />
              <path d="M1890 1780h70v60l-70 50z" fill="#b90b10" />
              <path d="M2785 1370h150v220l-150-20z" fill="#9e0508" />
              <path d="M2819 1581l86 33-28 220-92-60z" fill="#ae070b" />
              <path d="M2300 1800h480l155 60H2400z" fill="#8e0a08" />
              <path d="M2840 1580l95 10v-220h-60z" fill="#900509" />
            </svg>
            <LogWindow />
            <LibraryManager />
            <SchematicWindow />
            <PropertiesDialog />
            <Panel />
          </div>
        </main>
      </div>
      <StatusBar />
    </div>
  )
}
